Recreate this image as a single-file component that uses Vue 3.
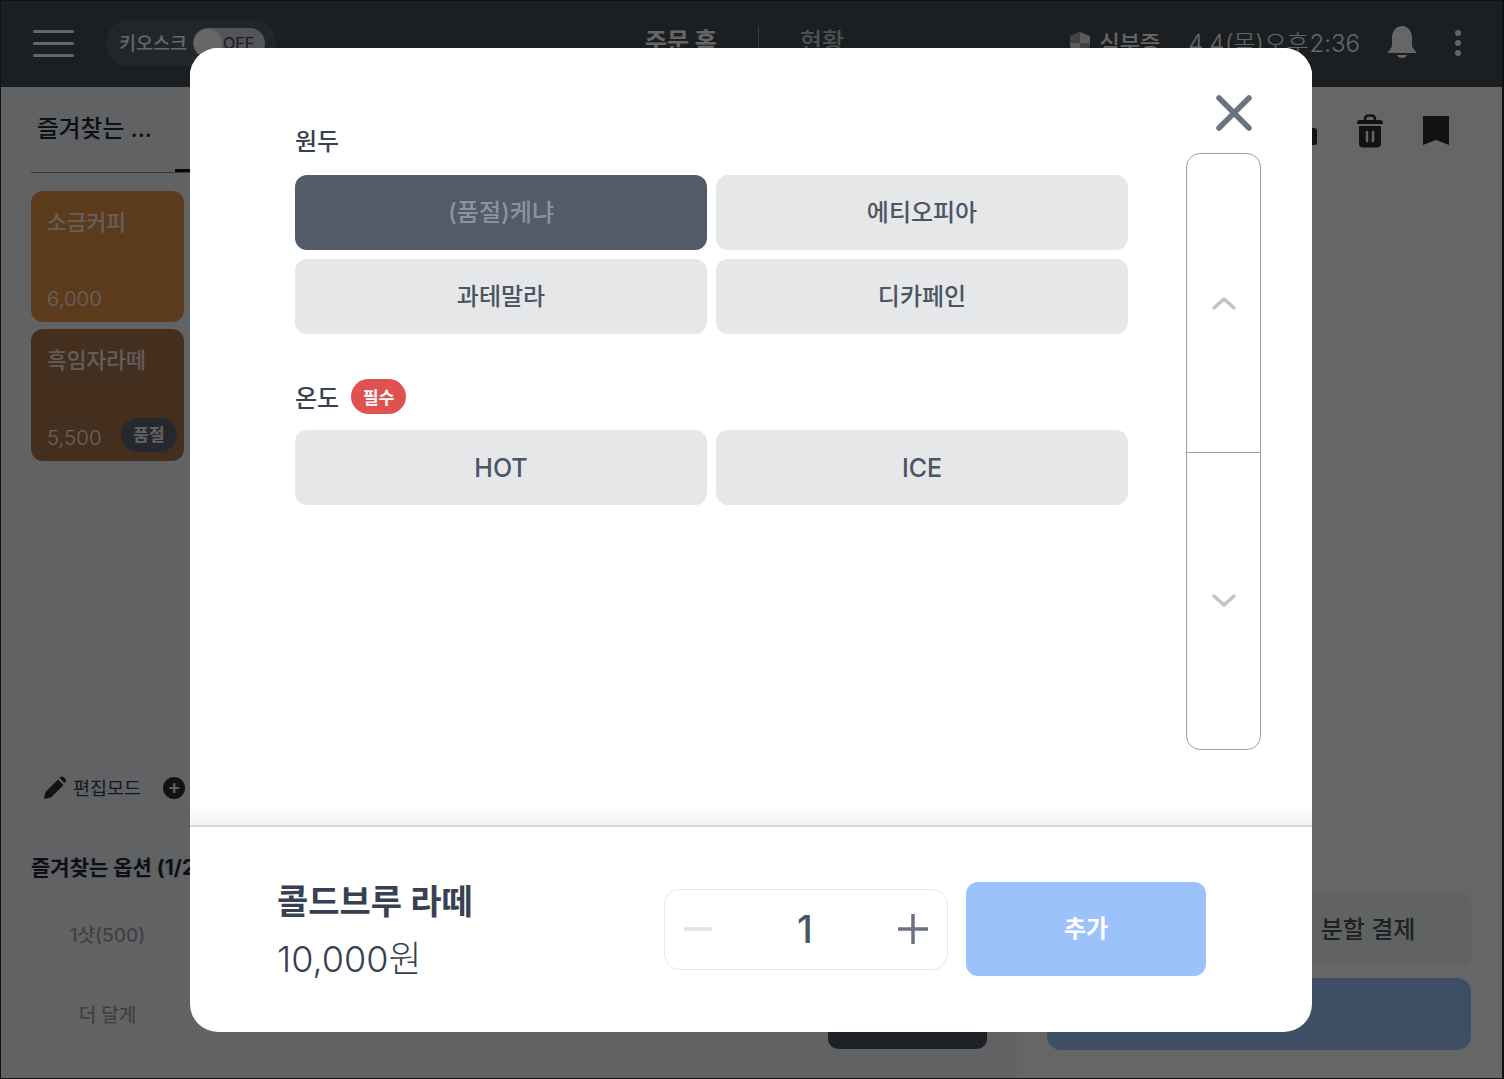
<template>
  <div class="page">
    <header class="topbar">
      <div class="menu-btn"><span></span><span></span><span></span></div>
      <div class="kiosk">
        <span class="kiosk-label">키오스크</span>
        <div class="toggle"><i class="knob"></i><span>OFF</span></div>
      </div>
      <nav class="nav">
        <span class="nav-on">주문 홈</span>
        <i class="nav-line"></i>
        <span class="nav-off">현황</span>
      </nav>
      <div class="status">
        <svg class="shield" viewBox="0 0 22 24" width="22" height="24">
          <path d="M11 1 21 5v8c0 5-4 8-10 10C5 21 1 18 1 13V5z" fill="#e2e3e4" />
          <path d="M11 1v11H1V5zM11 12h10c0 6-4 9-10 11z" fill="#a4a7a9" />
        </svg>
        <span class="status-text">심부증</span>
        <span class="clock">4.4 (목) 오후 2:36</span>
        <svg class="bell" viewBox="0 0 30 34" width="30" height="34">
          <path d="M15 0c6 0 10 5 10 12v7c0 3 2 4 4 7v1H1v-1c2-3 4-4 4-7v-7C5 5 9 0 15 0z" fill="#fff" />
          <path d="M10 29h10c-1 4-9 4-10 0z" fill="#fff" />
        </svg>
        <div class="dots"><i></i><i></i><i></i></div>
      </div>
    </header>

    <main class="workspace">
      <section class="left">
        <div class="tabs">
          <div class="tab">즐겨찾는 ...</div>
          <div class="tab-rest"></div>
        </div>
        <div class="cards">
          <div class="card orange">
            <div class="card-name">소금커피</div>
            <div class="card-bottom"><span>6,000</span></div>
          </div>
          <div class="card brown">
            <div class="card-name">흑임자라떼</div>
            <div class="card-bottom"><span>5,500</span><em class="soldout">품절</em></div>
          </div>
        </div>
        <div class="edit-row">
          <svg viewBox="0 0 24 24" width="24" height="24">
            <path d="M2 23l1.500-7L16 3.500l5.500 5.500L9 21.500zM17.500 2l1-1c1-.7 2-.7 3 0l2 2c.7 1 .7 2 0 3l-1 1z" fill="#2b2e31" />
          </svg>
          <span class="edit-label">편집모드</span>
          <b class="plus-dot">+</b>
        </div>
        <div class="fav-title">즐겨찾는 옵션 (1/2)</div>
        <div class="options">
          <div class="option" v-for="o in favOptions" :key="o.id" :class="{ dark: o.dark }">{{ o.label }}</div>
        </div>
      </section>

      <aside class="right">
        <div class="tools">
          <svg viewBox="0 0 28 32" width="28" height="32">
            <circle cx="15" cy="9" r="5" fill="none" stroke="#2b2e31" stroke-width="3" />
            <rect x="4" y="13" width="24" height="17" rx="3" fill="#2b2e31" />
          </svg>
          <svg viewBox="0 0 28 34" width="28" height="34">
            <path d="M9 6V5c0-2 1.500-3.500 3.500-3.500h3C17.500 1.500 19 3 19 5v1" fill="none" stroke="#2b2e31" stroke-width="2.500" />
            <path d="M1 9c0-2 1-3 3-3h20c2 0 3 1 3 3v1H1zM3 12h22v18c0 2-1.500 3.500-3.500 3.500h-15C4.500 33.500 3 32 3 30z" fill="#2b2e31" />
            <path d="M11 18v9M17 18v9" stroke="#fff" stroke-width="2.500" stroke-linecap="round" />
          </svg>
          <svg viewBox="0 0 26 30" width="26" height="30">
            <path d="M0 0h26v29L13 24 0 29z" fill="#2b2e31" />
          </svg>
        </div>
        <div class="pay">
          <div class="split"><span>분할 결제</span></div>
          <div class="pay-main"></div>
        </div>
      </aside>
    </main>

    <div class="overlay">
      <div class="modal">
        <button class="close" type="button">
          <svg viewBox="0 0 36 36" width="36" height="36">
            <path d="M3 3 33 33M33 3 3 33" stroke="#6b7280" stroke-width="5.500" stroke-linecap="round" />
          </svg>
        </button>
        <div class="modal-body">
          <div class="groups">
            <div class="group" v-for="g in groups" :key="g.name">
              <div class="group-title">
                <span>{{ g.name }}</span>
                <em v-if="g.required" class="required">필수</em>
              </div>
              <div class="choice-grid">
                <button
                  v-for="c in g.items"
                  :key="c.label"
                  type="button"
                  class="choice"
                  :class="{ off: c.off, latin: c.latin }"
                >{{ c.label }}</button>
              </div>
            </div>
          </div>
          <div class="scroller">
            <div class="scroll-part first">
              <svg viewBox="0 0 24 14" width="24" height="14">
                <path d="M2 12 12 3l10 9" fill="none" stroke="#c2c4c7" stroke-width="3.500" stroke-linecap="round" stroke-linejoin="round" />
              </svg>
            </div>
            <div class="scroll-part second">
              <svg viewBox="0 0 24 14" width="24" height="14">
                <path d="M2 2l10 9 10-9" fill="none" stroke="#c2c4c7" stroke-width="3.500" stroke-linecap="round" stroke-linejoin="round" />
              </svg>
            </div>
          </div>
        </div>
        <div class="modal-footer">
          <div class="product">
            <div class="product-name">콜드브루 라떼</div>
            <div class="product-price">10,000원</div>
          </div>
          <div class="qty">
            <svg viewBox="0 0 28 28" width="28" height="28">
              <path d="M1 14h26" stroke="#e0e1e3" stroke-width="3.500" stroke-linecap="round" />
            </svg>
            <span class="qty-num">1</span>
            <svg viewBox="0 0 30 30" width="30" height="30">
              <path d="M1 15h28M15 1v28" stroke="#6b7280" stroke-width="3.500" stroke-linecap="round" />
            </svg>
          </div>
          <button class="add" type="button">추가</button>
        </div>
      </div>
    </div>
  </div>
</template>

<script setup>
const favOptions = [
  { id: 1, label: "1샷(500)" },
  { id: 2, label: "" },
  { id: 3, label: "" },
  { id: 4, label: "" },
  { id: 5, label: "" },
  { id: 6, label: "" },
  { id: 7, label: "더 달게" },
  { id: 8, label: "" },
  { id: 9, label: "" },
  { id: 10, label: "" },
  { id: 11, label: "" },
  { id: 12, label: "", dark: true },
];

const groups = [
  {
    name: "원두",
    items: [
      { label: "(품절)케냐", off: true },
      { label: "에티오피아" },
      { label: "과테말라" },
      { label: "디카페인" },
    ],
  },
  {
    name: "온도",
    required: true,
    items: [
      { label: "HOT", latin: true },
      { label: "ICE", latin: true },
    ],
  },
];
</script>

<style>
html,
body {
  margin: 0;
  background: #000;
}
</style>

<style scoped>
.page {
  position: relative;
  width: 1504px;
  height: 1079px;
  overflow: hidden;
  box-sizing: border-box;
  border: 1px solid #111;
  border-right-width: 2px;
  display: flex;
  flex-direction: column;
  background: #fff;
  font-family: Inter, "Noto Sans CJK KR", sans-serif;
  color: #374151;
}

.topbar {
  height: 86px;
  flex: none;
  box-sizing: border-box;
  display: flex;
  align-items: center;
  background: #474e55;
  padding: 0 41px 2px 32px;
  color: #fff;
}

.menu-btn {
  width: 41px;
  display: flex;
  flex-direction: column;
  gap: 9px;
}

.menu-btn span {
  height: 3px;
  border-radius: 2px;
  background: #fff;
}

.kiosk {
  margin-left: 32px;
  width: 170px;
  height: 46px;
  box-sizing: border-box;
  padding: 0 10px 0 13px;
  display: flex;
  align-items: center;
  gap: 6px;
  border-radius: 23px;
  background: #55606b;
}

.kiosk-label {
  font-size: 18.500px;
  font-weight: 500;
  white-space: nowrap;
  padding-bottom: 2px;
}

.toggle {
  width: 72px;
  height: 30px;
  flex: none;
  border-radius: 15px;
  background: #d1d5db;
  display: flex;
  align-items: center;
  color: #374151;
  font-size: 16px;
}

.knob {
  width: 28px;
  height: 28px;
  margin: 0 1px;
  border-radius: 50%;
  background: #fff;
}

.nav {
  margin-left: 369px;
  display: flex;
  align-items: center;
  font-size: 24px;
  font-weight: 700;
  padding-bottom: 8px;
}

.nav-line {
  width: 1px;
  height: 26px;
  margin: 0 41px;
  background: #8b9096;
}

.nav-off {
  font-weight: 500;
  color: #c4c8cc;
}

.status {
  margin-left: auto;
  display: flex;
  align-items: center;
}

.status-text {
  margin-left: 8px;
  font-size: 22px;
  font-weight: 500;
  white-space: nowrap;
  padding-bottom: 4px;
}

.clock {
  margin-left: 28px;
  font-size: 24px;
  font-weight: 300;
  word-spacing: -6px;
  white-space: nowrap;
  padding-bottom: 3px;
}

.bell {
  margin-left: 27px;
}

.dots {
  margin-left: 38px;
  display: flex;
  flex-direction: column;
  gap: 4px;
}

.dots i {
  width: 6px;
  height: 6px;
  border-radius: 50%;
  background: #fff;
}

.workspace {
  flex: 1;
  min-height: 0;
  display: flex;
}

.left {
  width: 1016px;
  flex: none;
  box-sizing: border-box;
  padding: 0 30px;
  background: #f0f4f9;
  display: flex;
  flex-direction: column;
}

.tabs {
  display: flex;
  height: 85px;
  flex: none;
  border-bottom: 1px solid #8e9296;
}

.tab {
  width: 138px;
  padding: 23px 0 0 6px;
  box-sizing: content-box;
  font-size: 23.700px;
  font-weight: 500;
  white-space: nowrap;
  color: #1f2937;
}

.tab-rest {
  flex: 1;
  margin-top: 82px;
  height: 3px;
  background: #111;
}

.cards {
  margin-top: 18px;
  width: 153px;
  display: flex;
  flex-direction: column;
  gap: 7px;
}

.card {
  box-sizing: border-box;
  padding: 14px 16px 7px;
  border-radius: 12px;
  display: flex;
  flex-direction: column;
  justify-content: space-between;
  color: #fff;
}

.orange {
  height: 131px;
  background: #e69146;
}

.brown {
  height: 132px;
  background: #ab734a;
}

.card-name {
  font-size: 21.500px;
  font-weight: 500;
  opacity: 0.85;
}

.card-bottom {
  display: flex;
  align-items: flex-end;
  justify-content: space-between;
  font-size: 20.500px;
  font-weight: 300;
  line-height: 32px;
  opacity: 0.95;
}

.soldout {
  margin-right: -9px;
  margin-bottom: 2px;
  width: 56px;
  height: 34px;
  border-radius: 17px;
  display: flex;
  align-items: center;
  justify-content: center;
  background: #5a6675;
  font-size: 17px;
  font-style: normal;
  font-weight: 700;
}

.edit-row {
  margin-top: 312px;
  padding-left: 11px;
  display: flex;
  align-items: center;
  gap: 7px;
  height: 30px;
  font-size: 18.500px;
}

.edit-label {
  padding-bottom: 3px;
}

.plus-dot {
  width: 22px;
  height: 22px;
  margin-left: 15px;
  border-radius: 50%;
  background: #2b2e31;
  color: #fff;
  font-size: 20px;
  font-weight: 500;
  line-height: 21px;
  text-align: center;
}

.fav-title {
  margin-top: 48px;
  font-size: 21px;
  font-weight: 700;
  color: #1f2937;
  white-space: nowrap;
}

.options {
  margin-top: 22px;
  display: grid;
  grid-template-columns: 153px 154px 151px 151px 153px 159px;
  grid-auto-rows: 66px;
  gap: 14px 7px;
}

.option {
  display: flex;
  align-items: center;
  justify-content: center;
  box-sizing: border-box;
  padding-bottom: 6px;
  border-radius: 10px;
  background: #f8f8f8;
  color: #9ca3af;
  font-size: 19px;
  font-weight: 500;
}

.option.dark {
  background: #4b5563;
}

.right {
  flex: 1;
  display: flex;
  flex-direction: column;
  justify-content: space-between;
  padding: 0 31px 28px 30px;
}

.tools {
  display: flex;
  justify-content: flex-end;
  align-items: center;
  gap: 39px;
  padding: 27px 22px 0 0;
}

.pay {
  display: flex;
  flex-direction: column;
  gap: 13px;
}

.split {
  margin-left: 218px;
  height: 71px;
  box-sizing: border-box;
  padding-bottom: 4px;
  border-radius: 8px;
  background: #f3f4f6;
  display: flex;
  align-items: center;
  justify-content: center;
  font-size: 24px;
  font-weight: 500;
  color: #4b5563;
}

.pay-main {
  height: 72px;
  border-radius: 14px;
  background: #9bc2fb;
}

.overlay {
  position: absolute;
  inset: -1px -2px -1px -1px;
  background: rgba(0, 0, 0, 0.6);
}

.modal {
  position: absolute;
  left: 190px;
  top: 48px;
  width: 1122px;
  height: 984px;
  border-radius: 28px;
  background: #fff;
  display: flex;
  flex-direction: column;
  overflow: hidden;
}

.close {
  position: absolute;
  top: 47px;
  right: 60px;
  width: 36px;
  height: 36px;
  padding: 0;
  border: 0;
  background: none;
}

.close svg {
  display: block;
}

.modal-body {
  flex: 1;
  min-height: 0;
  display: flex;
  align-items: flex-start;
  padding: 0 51px 0 105px;
  background: linear-gradient(to bottom, #fff 757px, #f1f1f2 100%);
}

.groups {
  width: 833px;
  padding-top: 75px;
  display: flex;
  flex-direction: column;
  gap: 44px;
}

.group-title {
  height: 36px;
  box-sizing: border-box;
  margin-bottom: 16px;
  display: flex;
  align-items: center;
  gap: 12px;
  font-size: 24px;
  font-weight: 500;
  color: #374151;
}

.group:first-child .group-title {
  padding-bottom: 4px;
}

.required {
  width: 55px;
  height: 35px;
  border-radius: 18px;
  display: flex;
  align-items: center;
  justify-content: center;
  background: #e05252;
  color: #fff;
  font-size: 17px;
  font-style: normal;
  font-weight: 700;
}

.choice-grid {
  display: grid;
  grid-template-columns: 1fr 1fr;
  gap: 9px;
}

.choice {
  height: 75px;
  padding: 0 0 4px;
  border: 0;
  border-radius: 12px;
  background: #e5e7e9;
  color: #4b5563;
  font: 500 24px Inter, "Noto Sans CJK KR", sans-serif;
}

.choice.latin {
  padding-bottom: 0;
  font-size: 25px;
}

.choice.off {
  background: #515c68;
  color: #8a939c;
}

.scroller {
  margin: 105px 0 0 58px;
  width: 75px;
  height: 597px;
  box-sizing: border-box;
  border: 1px solid #9ca0a6;
  border-radius: 14px;
  display: flex;
  flex-direction: column;
}

.scroll-part {
  display: flex;
  align-items: center;
  justify-content: center;
}

.scroll-part.first {
  height: 298px;
  flex: none;
}

.scroll-part.second {
  flex: 1;
  border-top: 1px solid #9ca0a6;
}

.modal-footer {
  height: 207px;
  flex: none;
  box-sizing: border-box;
  border-top: 2px solid #d9dadc;
  padding: 55px 0 0 87px;
  display: flex;
  align-items: flex-start;
}

.product {
  width: 387px;
}

.product-name {
  font-size: 34px;
  font-weight: 700;
  line-height: 40px;
  color: #374151;
}

.product-price {
  margin-top: 15px;
  font-size: 36px;
  font-weight: 300;
  line-height: 44px;
  color: #374151;
}

.qty {
  width: 284px;
  height: 81px;
  margin-top: 7px;
  box-sizing: border-box;
  border: 1px solid #e5e7eb;
  border-radius: 16px;
  padding: 0 19px 2px;
  display: flex;
  align-items: center;
  justify-content: space-between;
}

.qty-num {
  font-size: 38px;
  font-weight: 500;
  color: #4b5563;
}

.add {
  width: 240px;
  height: 94px;
  margin-left: 18px;
  padding: 0 0 6px;
  border: 0;
  border-radius: 12px;
  background: #9bc2fb;
  color: #fff;
  font: 700 24px Inter, "Noto Sans CJK KR", sans-serif;
}
</style>
